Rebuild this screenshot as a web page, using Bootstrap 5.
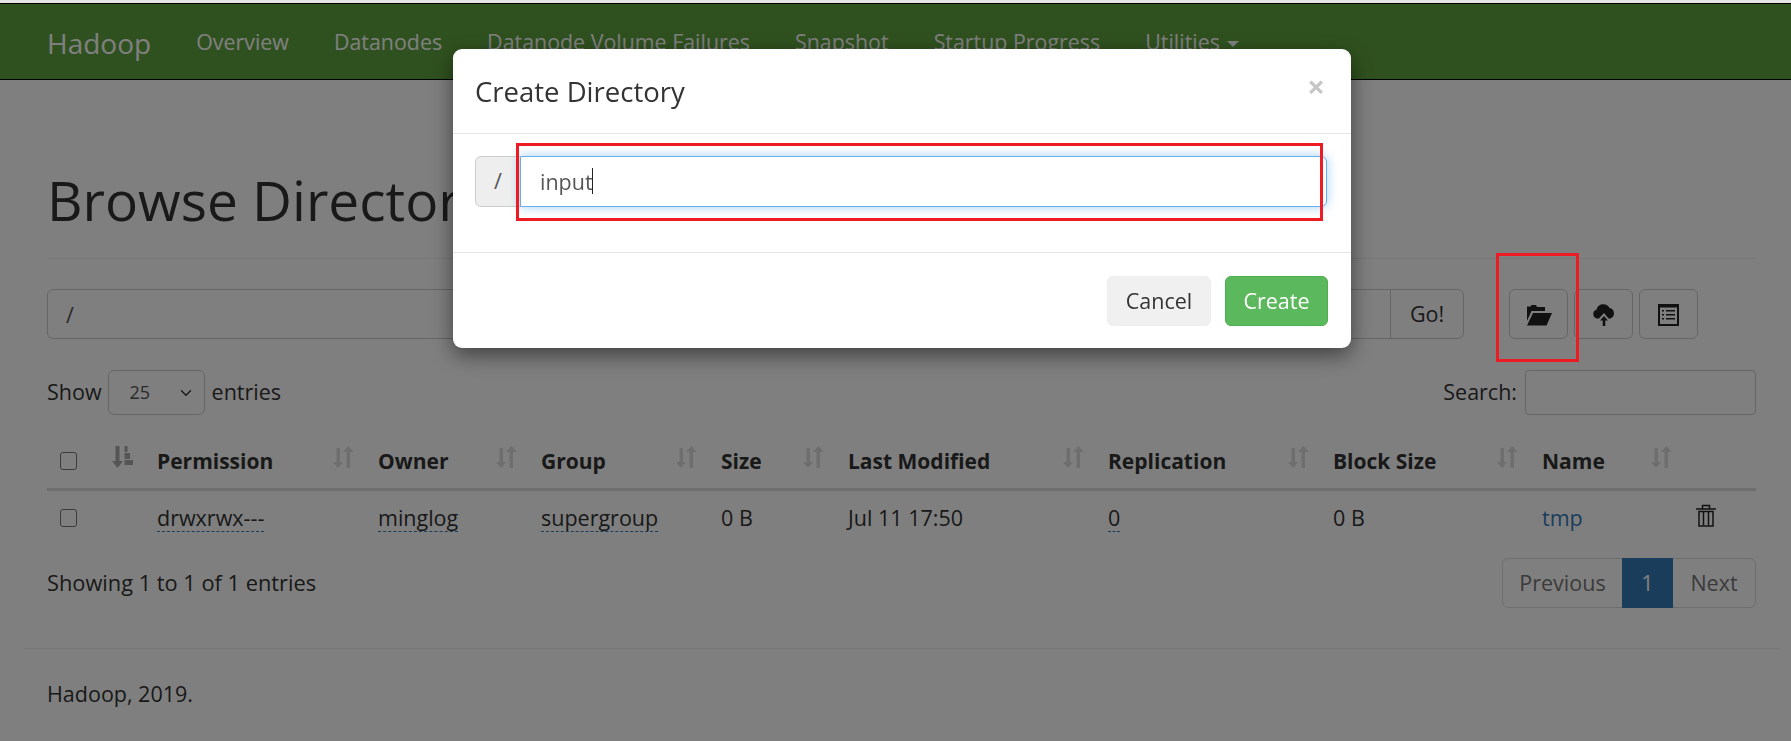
<!DOCTYPE html>
<html lang="en">
<head>
  <meta charset="UTF-8">
  <meta name="viewport" content="width=device-width, initial-scale=1.0">
  <title>Browsing HDFS</title>
  <link href="https://cdn.jsdelivr.net/npm/bootstrap@5.3.0/dist/css/bootstrap.min.css" rel="stylesheet">
  <style>
    html, body { height: 741px; overflow: hidden; }
    body { font-family: "Open Sans", "Noto Sans", sans-serif; font-size: 21.5px; color: #333; background: #fff; }
    .top-strip { height: 3px; background: #e4e4e4; position: relative; z-index: 1060; }
    .hd-nav { height: 77px; background: #5fa33e; border-top: 1px solid #000; border-bottom: 1px solid #000; padding: 2px 0 0 47px; gap: 45px; flex-wrap: nowrap; justify-content: flex-start; }
    .hd-brand { font-size: 28px; color: #fff; text-decoration: none; }
    .hd-link { color: #fff; font-size: 21.4px; text-decoration: none; white-space: nowrap; }
    .hd-caret { display: inline-block; border-top: 6px solid #fff; border-left: 6px solid transparent; border-right: 6px solid transparent; margin-left: 7px; vertical-align: 3px; }
    .page-box { margin: 0 12px 0 24px; padding: 0 23px; }
    .page-head { height: 179px; border-bottom: 1px solid #eee; padding-top: 87px; }
    .page-head h1 { font-size: 55px; font-weight: 400; line-height: 66px; margin: 0; color: #333; white-space: nowrap; }
    .path-bar { margin-top: 30px; height: 50px; }
    .path-group { width: 1417px; height: 50px; flex-wrap: nowrap; }
    .path-group .form-control { height: 50px; font-size: 21.5px; padding-left: 18px; border-color: #ccc; color: #555; }
    .go-btn { width: 74px; flex: none; font-size: 21.5px; border: 1px solid #ccc; color: #333; padding: 0; }
    .tool-btn { width: 59px; height: 50px; border: 1px solid #ccc; border-radius: 6px; padding: 0; background: #fff; }
    .tool-first { margin-left: 45px; }
    .tool-gap { margin-left: 6px; }
    .entries-row { margin-top: 31px; height: 45px; }
    .len-select { width: 97px; height: 45px; font-size: 18px; color: #555; border-color: #ccc; padding: 0 0 0 21px; background-position: right 10px center; margin: 0 7px 0 6px; }
    .search-box { width: 231px; height: 45px; border-color: #ccc; border-radius: 4px; }
    .hd-table { width: 1709px; table-layout: fixed; margin: 20px 0 0; color: #333; --bs-table-color: #333; }
    .hd-table col:nth-child(1) { width: 99px; }
    .hd-table col:nth-child(2) { width: 221px; }
    .hd-table col:nth-child(3) { width: 163px; }
    .hd-table col:nth-child(4) { width: 180px; }
    .hd-table col:nth-child(5) { width: 127px; }
    .hd-table col:nth-child(6) { width: 260px; }
    .hd-table col:nth-child(7) { width: 225px; }
    .hd-table col:nth-child(8) { width: 209px; }
    .hd-table col:nth-child(9) { width: 154px; }
    .hd-table col:nth-child(10) { width: 71px; }
    .hd-table th { height: 54px; padding: 0 13px 0 11px; vertical-align: middle; border-bottom: 3px solid #ddd; font-weight: 700; font-size: 21px; white-space: nowrap; }
    .hd-table td { height: 56px; padding: 0 11px; vertical-align: middle; border-bottom: 0; white-space: nowrap; }
    .hd-table .form-check-input { width: 17px; height: 18px; margin: 0 0 0 2px; border: 1px solid #767676; border-radius: 3px; display: block; }
    .sort-ico { display: block; flex: none; margin-top: -8px; }
    .dash-link { border-bottom: 1px dashed #337ab7; padding-bottom: 0; display: inline-block; line-height: 26px; }
    .name-link { color: #337ab7; text-decoration: none; }
    .hd-info { margin-top: 13px; line-height: 50px; font-size: 21.8px; }
    .hd-pager { margin: 13px 0 0; }
    .hd-pager .page-link { height: 50px; font-size: 21.5px; line-height: 48px; padding: 0; text-align: center; color: #777; border-color: #ddd; }
    .hd-pager .page-item:nth-child(1) .page-link { width: 121px; border-radius: 6px 0 0 6px; }
    .hd-pager .page-item:nth-child(2) .page-link { width: 51px; background: #337ab7; border-color: #337ab7; color: #fff; }
    .hd-pager .page-item:nth-child(3) .page-link { width: 84px; border-radius: 0 6px 6px 0; }
    .foot-line { border-top: 1px solid #eee; margin: 40px 12px 0 24px; padding: 32px 23px 0; line-height: 26px; }
    .hd-dialog { max-width: none; width: 898px; margin: 49px 0 0 453px; }
    .hd-dialog .modal-content { height: 299px; border: 0; border-radius: 9px; box-shadow: 0 7px 21px rgba(0,0,0,.5); }
    .hd-dialog .modal-header { height: 85px; padding: 2px 22px 0; border-bottom: 1px solid #e5e5e5; }
    .hd-dialog .modal-title { font-size: 27.5px; line-height: 1; font-weight: 400; color: #333; }
    .hd-x { font-size: 31px; line-height: 1; color: #c6c6c6; font-weight: 700; background: none; border: 0; padding: 0; margin: -11px 4px 0 0; }
    .hd-dialog .modal-body { height: 118px; flex: none; padding: 22px 24px 0 22px; }
    .dir-group { height: 51px; flex-wrap: nowrap; }
    .dir-prefix { width: 46px; justify-content: center; padding: 0; background: #eee; border-color: #ccc; color: #555; font-size: 21.5px; border-radius: 6px 0 0 6px; }
    .dir-wrap { flex: 1; position: relative; margin-left: -1px; }
    .dir-wrap .form-control { height: 51px; font-size: 21.5px; color: #555; padding-left: 19px; border: 1px solid #66afe9; box-shadow: 0 0 11px rgba(102,175,233,.6); border-radius: 0 6px 6px 0; }
    .fake-caret { position: absolute; left: 72px; top: 12px; height: 26px; width: 1px; background: #222; }
    .hd-dialog .modal-footer { height: 96px; padding: 0 23px 0 0; border-top: 1px solid #e5e5e5; gap: 14px; align-items: flex-start; }
    .hd-dialog .modal-footer .btn { margin: 23px 0 0; height: 50px; font-size: 21.5px; border-radius: 6px; padding: 0; }
    .cancel-btn { width: 104px; background: #f0f0f0; border: 1px solid #eee; color: #333; }
    .create-btn { width: 103px; background: #5cb85c; border: 1px solid #4cae4c; color: #fff; }
    .red-mark { position: fixed; border: 3px solid #ed1c24; z-index: 1060; pointer-events: none; }
    .mark-input { left: 516px; top: 143px; width: 807px; height: 78px; }
    .mark-folder { left: 1496px; top: 253px; width: 83px; height: 109px; }
  </style>
</head>
<body>
  <div class="top-strip"></div>
  <nav class="navbar hd-nav">
    <a class="hd-brand" href="#">Hadoop</a>
    <a class="hd-link" href="#">Overview</a>
    <a class="hd-link" href="#">Datanodes</a>
    <a class="hd-link" href="#">Datanode Volume Failures</a>
    <a class="hd-link" href="#">Snapshot</a>
    <a class="hd-link" href="#">Startup Progress</a>
    <a class="hd-link" href="#">Utilities<span class="hd-caret"></span></a>
  </nav>

  <div class="page-box">
    <div class="page-head"><h1>Browse Directory</h1></div>

    <div class="d-flex path-bar">
      <div class="input-group path-group">
        <input type="text" class="form-control" value="/">
        <button class="btn go-btn" type="button">Go!</button>
      </div>
      <button class="btn tool-btn tool-first" type="button">
        <svg width="26" height="21" viewBox="0 0 26 21" fill="#222"><path d="M1 3V1.500h3.500L5.500 0H10l1 2h8v4H5.500L1 16z"/><path d="M7 8h19l-5.500 12.500H1z"/></svg>
      </button>
      <button class="btn tool-btn tool-gap" type="button">
        <svg width="22" height="22" viewBox="0 0 22 22" fill="#222"><path d="M6 14.500H4.500a4.500 4.500 0 0 1-1-8.800A7 7 0 0 1 16.500 4a5.500 5.500 0 0 1 1 10.500H15.500L11 9z"/><path d="M11 12l4 4.500h-2.700V22H9.700v-5.500H7z"/></svg>
      </button>
      <button class="btn tool-btn tool-gap" type="button">
        <svg width="21" height="22" viewBox="0 0 21 22" fill="#222"><path fill-rule="evenodd" d="M0 0h21v22H0zM2 3.500v16.500h17V3.500z"/><path d="M4 6h2v1.500H4zM8 6h9v1.500H8zM4 10h2v1.500H4zM8 10h9v1.500H8zM4 14h2v1.500H4zM8 14h9v1.500H8z"/></svg>
      </button>
    </div>

    <div class="d-flex justify-content-between align-items-center entries-row">
      <div class="d-flex align-items-center">
        <span>Show</span>
        <select class="form-select len-select"><option>25</option></select>
        <span>entries</span>
      </div>
      <div class="d-flex align-items-center gap-2">
        <span>Search:</span>
        <input type="text" class="form-control search-box">
      </div>
    </div>

    <table class="table hd-table">
      <colgroup><col><col><col><col><col><col><col><col><col><col></colgroup>
      <thead>
        <tr>
          <th><div class="d-flex justify-content-between align-items-center">
            <input class="form-check-input" type="checkbox">
            <svg class="sort-ico" width="21" height="22" viewBox="0 0 21 22" fill="#aaa"><path d="M3.500 0h4v15H11l-5.500 7L0 15h3.500z"/><path d="M12.500 0h3v6h-3zM12.500 7h5.500v6h-5.500zM12.500 14h8.500v5h-8.500z"/></svg>
          </div></th>
          <th><div class="d-flex justify-content-between align-items-center">Permission<svg class="sort-ico" width="21" height="22" viewBox="0 0 21 22" fill="#ddd"><path d="M3.500 2h3.500v14h3l-5 6-5-6h3.500z"/><path d="M13.500 22h3.500V6h3.500l-5.200-6-5.300 6h3.500z"/></svg></div></th>
          <th><div class="d-flex justify-content-between align-items-center">Owner<svg class="sort-ico" width="21" height="22" viewBox="0 0 21 22" fill="#ddd"><path d="M3.500 2h3.500v14h3l-5 6-5-6h3.500z"/><path d="M13.500 22h3.500V6h3.500l-5.200-6-5.300 6h3.500z"/></svg></div></th>
          <th><div class="d-flex justify-content-between align-items-center">Group<svg class="sort-ico" width="21" height="22" viewBox="0 0 21 22" fill="#ddd"><path d="M3.500 2h3.500v14h3l-5 6-5-6h3.500z"/><path d="M13.500 22h3.500V6h3.500l-5.200-6-5.300 6h3.500z"/></svg></div></th>
          <th><div class="d-flex justify-content-between align-items-center">Size<svg class="sort-ico" width="21" height="22" viewBox="0 0 21 22" fill="#ddd"><path d="M3.500 2h3.500v14h3l-5 6-5-6h3.500z"/><path d="M13.500 22h3.500V6h3.500l-5.200-6-5.300 6h3.500z"/></svg></div></th>
          <th><div class="d-flex justify-content-between align-items-center">Last Modified<svg class="sort-ico" width="21" height="22" viewBox="0 0 21 22" fill="#ddd"><path d="M3.500 2h3.500v14h3l-5 6-5-6h3.500z"/><path d="M13.500 22h3.500V6h3.500l-5.200-6-5.300 6h3.500z"/></svg></div></th>
          <th><div class="d-flex justify-content-between align-items-center">Replication<svg class="sort-ico" width="21" height="22" viewBox="0 0 21 22" fill="#ddd"><path d="M3.500 2h3.500v14h3l-5 6-5-6h3.500z"/><path d="M13.500 22h3.500V6h3.500l-5.200-6-5.300 6h3.500z"/></svg></div></th>
          <th><div class="d-flex justify-content-between align-items-center">Block Size<svg class="sort-ico" width="21" height="22" viewBox="0 0 21 22" fill="#ddd"><path d="M3.500 2h3.500v14h3l-5 6-5-6h3.500z"/><path d="M13.500 22h3.500V6h3.500l-5.200-6-5.300 6h3.500z"/></svg></div></th>
          <th><div class="d-flex justify-content-between align-items-center">Name<svg class="sort-ico" width="21" height="22" viewBox="0 0 21 22" fill="#ddd"><path d="M3.500 2h3.500v14h3l-5 6-5-6h3.500z"/><path d="M13.500 22h3.500V6h3.500l-5.200-6-5.300 6h3.500z"/></svg></div></th>
          <th></th>
        </tr>
      </thead>
      <tbody>
        <tr>
          <td><input class="form-check-input" type="checkbox"></td>
          <td><span class="dash-link">drwxrwx---</span></td>
          <td><span class="dash-link">minglog</span></td>
          <td><span class="dash-link">supergroup</span></td>
          <td>0 B</td>
          <td>Jul 11 17:50</td>
          <td><span class="dash-link">0</span></td>
          <td>0 B</td>
          <td><a class="name-link" href="#">tmp</a></td>
          <td>
            <svg class="d-block mb-1" width="20" height="23" viewBox="0 0 20 23" fill="none" stroke="#222" stroke-width="1.500"><path d="M0 5h20M6.500 5V1.500h7V5M3 7.500h14V22H3zM7.500 8v13M12.500 8v13"/></svg>
          </td>
        </tr>
      </tbody>
    </table>

    <div class="d-flex justify-content-between align-items-start">
      <div class="hd-info">Showing 1 to 1 of 1 entries</div>
      <ul class="pagination hd-pager">
        <li class="page-item"><a class="page-link" href="#">Previous</a></li>
        <li class="page-item active"><a class="page-link" href="#">1</a></li>
        <li class="page-item"><a class="page-link" href="#">Next</a></li>
      </ul>
    </div>
  </div>

  <div class="foot-line">Hadoop, 2019.</div>

  <div class="modal-backdrop show"></div>
  <div class="modal d-block">
    <div class="modal-dialog hd-dialog">
      <div class="modal-content">
        <div class="modal-header">
          <h4 class="modal-title">Create Directory</h4>
          <button class="hd-x" type="button">×</button>
        </div>
        <div class="modal-body">
          <div class="input-group dir-group">
            <span class="input-group-text dir-prefix">/</span>
            <div class="dir-wrap">
              <input type="text" class="form-control" value="input">
              <span class="fake-caret"></span>
            </div>
          </div>
        </div>
        <div class="modal-footer">
          <button class="btn cancel-btn" type="button">Cancel</button>
          <button class="btn create-btn" type="button">Create</button>
        </div>
      </div>
    </div>
  </div>

  <div class="red-mark mark-input"></div>
  <div class="red-mark mark-folder"></div>
</body>
</html>
